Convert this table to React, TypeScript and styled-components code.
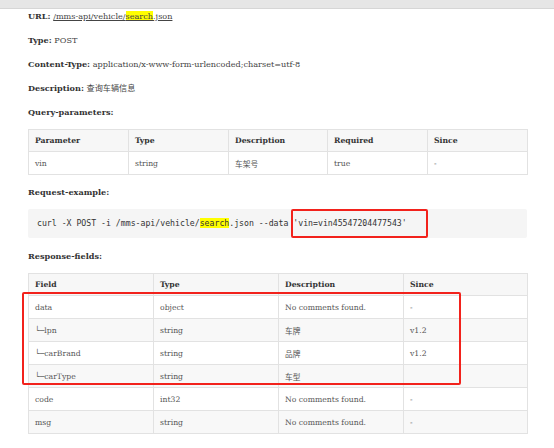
import React from "react";
import styled, { createGlobalStyle } from "styled-components";

const Global = createGlobalStyle`
  html, body { margin: 0; padding: 0; background: #fff; }
  body { font-family: "DejaVu Serif", "Noto Sans CJK SC", serif; color: #333; }
`;

const TopBar = styled.div`
  height: 8px;
  background: #e6e6e6;
  border-bottom: 1px solid #d6d6d6;
`;

const Content = styled.div`
  padding: 0 0 0 28px;
  width: 499px;
  display: flex;
  flex-direction: column;
  gap: 10px;
`;

const Para = styled.p`
  margin: 0;
  font-size: 8.15px;
  line-height: 14px;
  color: #444;
  white-space: nowrap;
`;

const Label = styled.strong`
  font-weight: bold;
  color: #333;
`;

const Link = styled.span`
  text-decoration: underline;
  color: #444;
`;

const Mark = styled.span`
  background: #ffff00;
`;

const Table = styled.table`
  border-collapse: collapse;
  table-layout: fixed;
  width: 499px;
  font-size: 7.7px;
`;

const Th = styled.th<{ $w: number }>`
  box-sizing: border-box;
  width: ${(p) => p.$w}px;
  height: 22px;
  padding: 0 6px;
  text-align: left;
  font-weight: bold;
  color: #333;
  background: #f7f7f7;
  border: 1px solid #e2e2e2;
`;

const Tr = styled.tr<{ $alt?: boolean }>`
  background: ${(p) => (p.$alt ? "#f8f8f8" : "#fff")};
`;

const Td = styled.td`
  box-sizing: border-box;
  height: 23px;
  padding: 0 6px;
  color: #555;
  border: 1px solid #e2e2e2;
  white-space: nowrap;
`;

const Code = styled.pre`
  position: relative;
  margin: 0 0 1px;
  height: 29px;
  box-sizing: border-box;
  padding: 0 9px;
  background: #f5f5f5;
  border-radius: 2px;
  font-family: "DejaVu Sans Mono", monospace;
  font-size: 8.2px;
  line-height: 29px;
  color: #333;
`;

const Wrap = styled.div`
  position: relative;
`;

const RedBox = styled.div`
  position: absolute;
  border: 2px solid #f2221c;
  border-radius: 2px;
  box-sizing: border-box;
  pointer-events: none;
`;

const CodeBox = styled(RedBox)`
  left: 263px;
  top: 0;
  width: 137px;
  height: 29px;
`;

const RowsBox = styled(RedBox)`
  left: -6px;
  top: 19px;
  width: 439px;
  height: 93px;
`;

const query = [["vin", "string", "车架号", "true", "-"]];

const fields = [
  ["data", "object", "No comments found.", "-"],
  ["└─lpn", "string", "车牌", "v1.2"],
  ["└─carBrand", "string", "品牌", "v1.2"],
  ["└─carType", "string", "车型", ""],
  ["code", "int32", "No comments found.", "-"],
  ["msg", "string", "No comments found.", "-"],
];

export default function App() {
  return (
    <>
      <Global />
      <TopBar />
      <Content>
        <Para>
          <Label>URL:</Label> <Link>/mms-api/vehicle/<Mark>search</Mark>.json</Link>
        </Para>
        <Para>
          <Label>Type:</Label> POST
        </Para>
        <Para>
          <Label>Content-Type:</Label> application/x-www-form-urlencoded;charset=utf-8
        </Para>
        <Para>
          <Label>Description:</Label> 查询车辆信息
        </Para>
        <Para>
          <Label>Query-parameters:</Label>
        </Para>
        <Table>
          <thead>
            <tr>
              <Th $w={100}>Parameter</Th>
              <Th $w={100}>Type</Th>
              <Th $w={99}>Description</Th>
              <Th $w={100}>Required</Th>
              <Th $w={100}>Since</Th>
            </tr>
          </thead>
          <tbody>
            {query.map((r, i) => (
              <Tr key={i}>
                {r.map((c, j) => (
                  <Td key={j}>{c}</Td>
                ))}
              </Tr>
            ))}
          </tbody>
        </Table>
        <Para>
          <Label>Request-example:</Label>
        </Para>
        <Code>
          curl -X POST -i /mms-api/vehicle/<Mark>search</Mark>.json --data 'vin=vin45547204477543'
          <CodeBox />
        </Code>
        <Para>
          <Label>Response-fields:</Label>
        </Para>
        <Wrap>
          <Table>
            <thead>
              <tr>
                <Th $w={125}>Field</Th>
                <Th $w={125}>Type</Th>
                <Th $w={125}>Description</Th>
                <Th $w={124}>Since</Th>
              </tr>
            </thead>
            <tbody>
              {fields.map((r, i) => (
                <Tr key={i} $alt={i % 2 === 1}>
                  {r.map((c, j) => (
                    <Td key={j}>{c}</Td>
                  ))}
                </Tr>
              ))}
            </tbody>
          </Table>
          <RowsBox />
        </Wrap>
      </Content>
    </>
  );
}
